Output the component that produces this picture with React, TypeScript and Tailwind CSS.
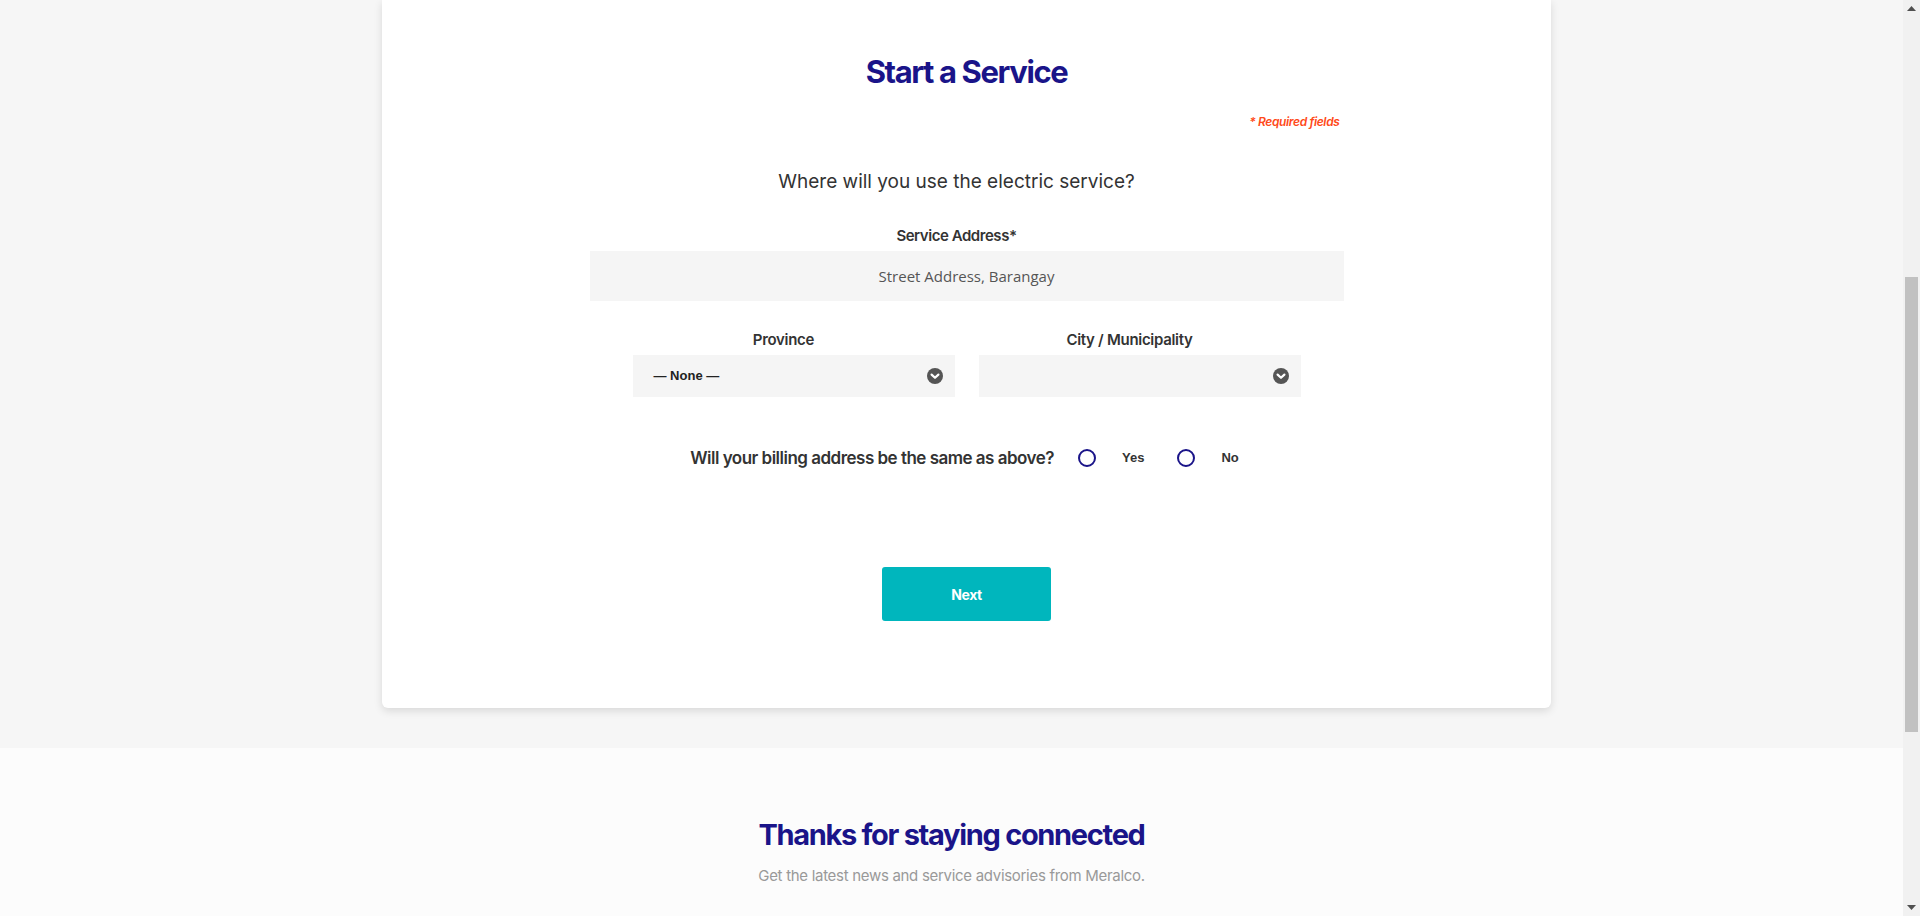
import React from "react";

function Chevron() {
  return (
    <svg width="16" height="16" viewBox="0 0 16 16" aria-hidden="true">
      <circle cx="8" cy="8" r="8" fill="#555555" />
      <path d="M4.6 6.6 L8 9.8 L11.4 6.6" fill="none" stroke="#ffffff" strokeWidth="2.2" strokeLinecap="round" strokeLinejoin="round" />
    </svg>
  );
}

function Select({ value }: { value: string }) {
  return (
    <div className="flex h-[42px] w-[322px] items-center justify-between bg-[#f5f5f5] pl-[21px] pr-[12px]">
      <span className="text-[13px] font-semibold text-[#222]" style={{ fontFamily: '"Liberation Sans", Arial, sans-serif' }}>
        {value}
      </span>
      <Chevron />
    </div>
  );
}

function Radio({ label }: { label: string }) {
  return (
    <div className="flex items-center">
      <span className="block h-[18px] w-[18px] rounded-full border-2 border-[#1a1489]" />
      <span className="ml-[26px] text-[13px] font-bold text-[#333]" style={{ fontFamily: '"Liberation Sans", Arial, sans-serif' }}>
        {label}
      </span>
    </div>
  );
}

export default function App() {
  const head = { fontFamily: 'Inter, "Noto Sans", sans-serif' };
  return (
    <div className="flex h-[916px] w-full overflow-hidden bg-[#f6f6f6]">
      <div className="flex min-w-0 flex-1 flex-col" style={head}>
        <div className="h-[748px] pl-[382px]">
          <div className="flex h-[708px] w-[1169px] flex-col items-center rounded-b-[6px] bg-white pt-[52px] shadow-[0_3px_8px_rgba(0,0,0,0.12)]">
            <h1 className="text-[31px] font-bold leading-[40px] tracking-[-0.045em] text-[#1a1489]">Start a Service</h1>
            <div className="mt-[20px] flex w-[754px] justify-end pr-[4px]">
              <span className="text-[12px] font-semibold italic leading-[20px] tracking-[-0.03em] text-[#ff4a1a]">* Required fields</span>
            </div>
            <p className="mt-[38px] pr-[20px] text-[19px] leading-[24px] text-[#333]">Where will you use the electric service?</p>
            <label className="mt-[32px] pr-[20px] text-[15px] font-semibold leading-[20px] tracking-[-0.03em] text-[#333]">Service Address*</label>
            <div
              className="mt-[5px] flex h-[50px] w-[754px] items-center justify-center bg-[#f5f5f5] text-[15px] text-[#555]"
              style={{ fontFamily: '"Open Sans", sans-serif' }}
            >
              Street Address, Barangay
            </div>
            <div className="mt-[29px] flex gap-[24px]">
              <div className="flex flex-col items-center">
                <span className="pr-[20px] text-[15px] font-semibold leading-[20px] tracking-[-0.02em] text-[#333]">Province</span>
                <div className="mt-[5px]">
                  <Select value="— None —" />
                </div>
              </div>
              <div className="flex flex-col items-center">
                <span className="pr-[20px] text-[15px] font-semibold leading-[20px] tracking-[-0.02em] text-[#333]">City / Municipality</span>
                <div className="mt-[5px]">
                  <Select value="" />
                </div>
              </div>
            </div>
            <div className="mt-[49px] flex items-center pr-[4px]">
              <span className="text-[17px] font-semibold leading-[24px] tracking-[-0.03em] text-[#333]">Will your billing address be the same as above?</span>
              <div className="ml-[24px]">
                <Radio label="Yes" />
              </div>
              <div className="ml-[33px]">
                <Radio label="No" />
              </div>
            </div>
            <button className="mt-[97px] h-[54px] w-[169px] rounded-[3px] bg-[#00b6bd] text-[14px] font-bold tracking-[-0.03em] text-white">
              Next
            </button>
          </div>
        </div>
        <div className="flex flex-1 flex-col items-center bg-[#fcfcfc] pt-[67px]">
          <h2 className="text-[29px] font-bold leading-[40px] tracking-[-0.045em] text-[#1a1489]">Thanks for staying connected</h2>
          <p className="mt-[10px] text-[15px] leading-[22px] tracking-[-0.02em] text-[#999]">Get the latest news and service advisories from Meralco.</p>
        </div>
      </div>
      <div className="flex h-full w-[17px] flex-col items-center bg-[#f1f1f1]">
        <div className="flex h-[17px] items-center justify-center">
          <svg width="9" height="5" viewBox="0 0 9 5"><path d="M0 5 L4.5 0 L9 5 Z" fill="#505050" /></svg>
        </div>
        <div className="mt-[260px] h-[455px] w-[13px] bg-[#c1c1c1]" />
        <div className="flex-1" />
        <div className="flex h-[17px] items-center justify-center">
          <svg width="9" height="5" viewBox="0 0 9 5"><path d="M0 0 L9 0 L4.5 5 Z" fill="#505050" /></svg>
        </div>
      </div>
    </div>
  );
}
